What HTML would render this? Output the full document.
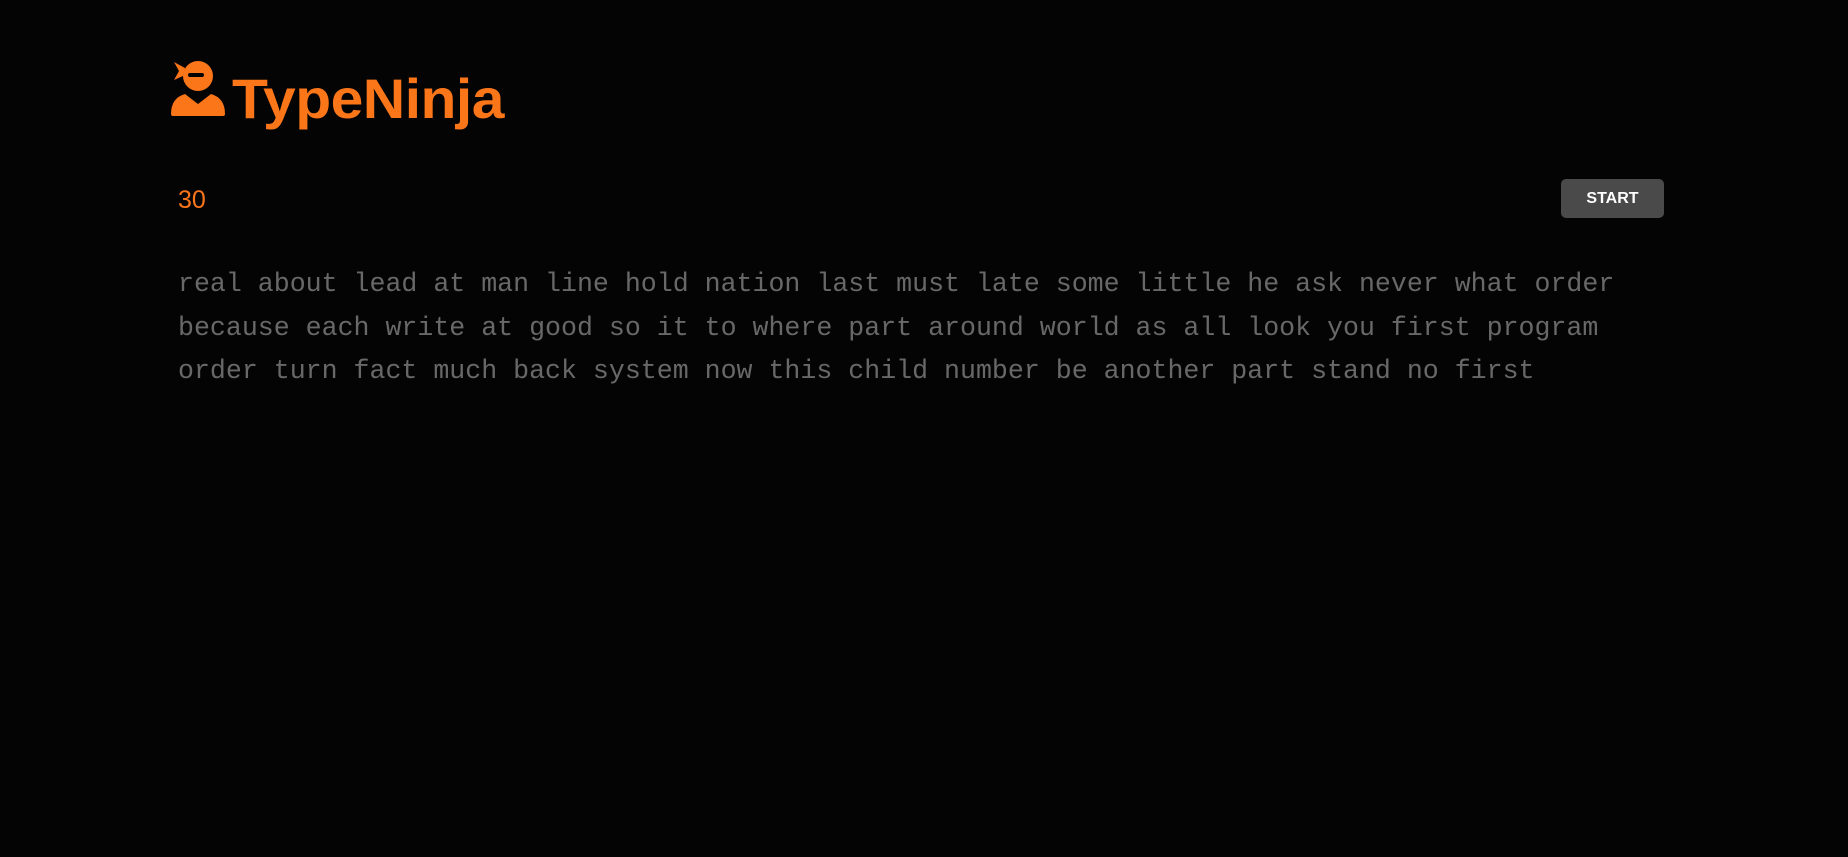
<!DOCTYPE html>
<html><head><meta charset="utf-8"><style>
html,body{margin:0;padding:0;background:#040404;width:1848px;height:857px;overflow:hidden}
.logo{position:absolute;left:171px;top:58px}
.name{position:absolute;left:232px;top:66px;font-family:"Liberation Sans",sans-serif;font-weight:bold;font-size:56px;color:#fb7519;letter-spacing:-0.5px;transform:scaleX(1.05);transform-origin:left}
.timer{position:absolute;left:178px;top:186px;font-family:"Liberation Sans",sans-serif;font-size:25px;color:#fb7519}
.btn{position:absolute;left:1561px;top:179px;width:103px;height:39px;background:#4a4a4a;border-radius:5px;color:#fff;font-family:"Liberation Sans",sans-serif;font-weight:bold;font-size:16px;line-height:39px;text-align:center}
.txt{position:absolute;left:178px;top:263px;width:1500px;font-family:"Liberation Mono",monospace;font-size:26.6px;line-height:43.6px;color:#686868;white-space:pre}
</style></head><body>
<svg class="logo" width="54" height="60" viewBox="0 0 54 60">
<circle cx="27" cy="18" r="15" fill="#fb7519"/>
<rect x="17" y="15" width="16" height="4" rx="2" fill="#040404"/>
<path d="M3 4 L14 10 L12 18 L3 22 L8 13 Z" fill="#fb7519"/>
<path d="M0 56 Q0 40 14 36 L27 46 L40 36 Q54 40 54 56 Q54 58 52 58 L2 58 Q0 58 0 56Z" fill="#fb7519"/>
</svg>
<div class="name">TypeNinja</div>
<div class="timer">30</div>
<div class="btn">START</div>
<div class="txt">real about lead at man line hold nation last must late some little he ask never what order
because each write at good so it to where part around world as all look you first program
order turn fact much back system now this child number be another part stand no first</div>
</body></html>
